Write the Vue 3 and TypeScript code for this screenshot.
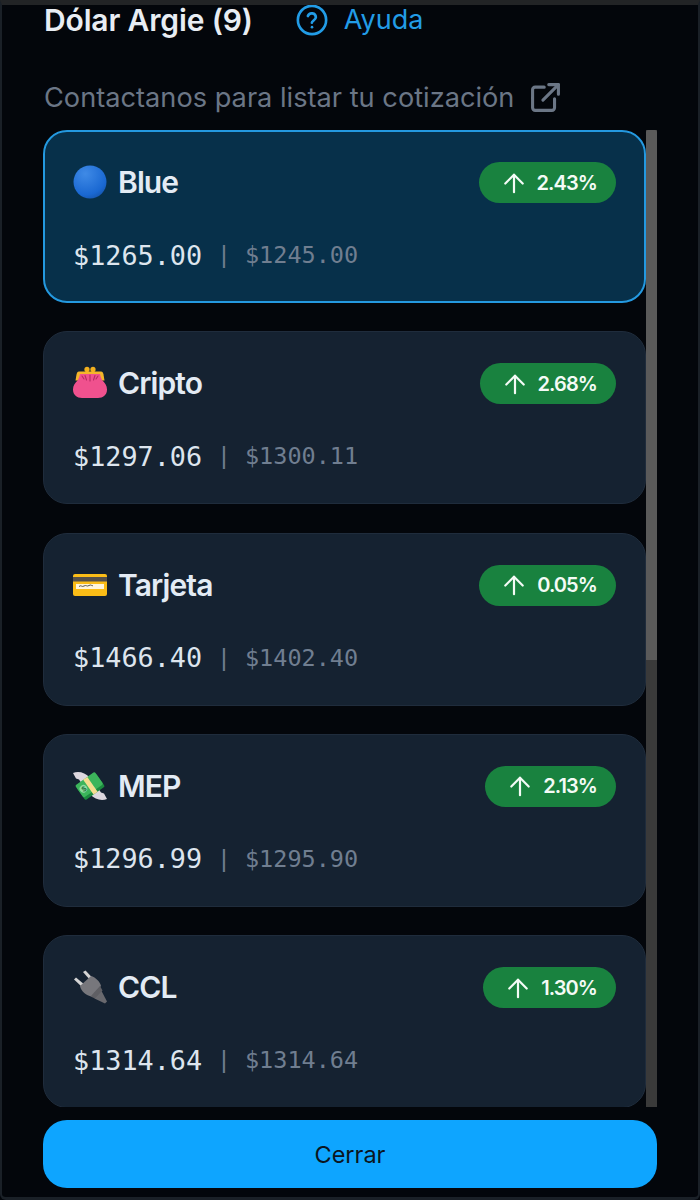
<script setup lang="ts">
interface Quote {
  name: string
  icon: string
  buy: string
  sell: string
  change: string
  active?: boolean
}

const quotes: Quote[] = [
  { name: 'Blue', icon: 'blue', buy: '$1265.00', sell: '$1245.00', change: '2.43%', active: true },
  { name: 'Cripto', icon: 'purse', buy: '$1297.06', sell: '$1300.11', change: '2.68%' },
  { name: 'Tarjeta', icon: 'card', buy: '$1466.40', sell: '$1402.40', change: '0.05%' },
  { name: 'MEP', icon: 'money', buy: '$1296.99', sell: '$1295.90', change: '2.13%' },
  { name: 'CCL', icon: 'plug', buy: '$1314.64', sell: '$1314.64', change: '1.30%' },
]

// la lista completa tiene 9 filas, la barra refleja eso
const totalQuotes = 9
const thumbHeight = `${(5 / totalQuotes) * 97.6}%`
</script>

<template>
  <div class="modal">
    <div class="head">
      <h2 class="title">Dólar Argie ({{ totalQuotes }})</h2>
      <a class="help">
        <svg class="help-icon" viewBox="0 0 24 24" fill="none" stroke="currentColor" stroke-width="2" stroke-linecap="round" stroke-linejoin="round">
          <circle cx="12" cy="12" r="10.6" />
          <path d="M8.9 9a3.1 3.1 0 0 1 6 1c0 2-3 2.6-3 4" />
          <path d="M12 17.4h.01" />
        </svg>
        Ayuda
      </a>
    </div>

    <a class="contact">
      Contactanos para listar tu cotización
      <svg class="contact-icon" viewBox="0 0 24 24" fill="none" stroke="currentColor" stroke-width="2.4" stroke-linecap="round" stroke-linejoin="round">
        <path d="M11 4H4a2 2 0 0 0-2 2v14a2 2 0 0 0 2 2h13a2 2 0 0 0 2-2v-7" />
        <path d="M10 14 22 2" />
        <path d="M14.5 2H22v7.5" />
      </svg>
    </a>

    <div class="list-wrap">
      <div class="list">
        <div v-for="q in quotes" :key="q.name" class="card" :class="{ active: q.active }">
          <div class="card-top">
            <div class="name">
              <svg class="emoji" viewBox="0 0 34 34">
                <template v-if="q.icon === 'blue'">
                  <defs>
                    <radialGradient id="ball" cx="0.36" cy="0.25" r="0.85">
                      <stop offset="0" stop-color="#3f8ae6" />
                      <stop offset="0.75" stop-color="#1a68d2" />
                      <stop offset="1" stop-color="#1553a8" />
                    </radialGradient>
                  </defs>
                  <circle cx="17" cy="17" r="16.5" fill="url(#ball)" />
                </template>
                <template v-else-if="q.icon === 'purse'">
                  <circle cx="14" cy="3.4" r="2.6" fill="#f2b01e" />
                  <circle cx="20" cy="3.4" r="2.6" fill="#f2b01e" />
                  <path d="M6 5.500h22c1.500 0 2 1 2.500 3l1 6H2.500l1-6c.5-2 1-3 2.500-3z" fill="#f4b52a" />
                  <path d="M7 8h20c.5 3 1.500 5 2.500 6.500 2.500 2.500 4.500 5 4.500 9 0 5.500-4 8.500-9 8.500H9c-5 0-9-3-9-8.500 0-4 2-6.500 4.500-9C5.500 13 6.500 11 7 8z" fill="#f0518e" />
                  <path d="M17 9v6M12 9.500l1.500 4.500M22 9.500 20.500 14M9 10l2 3M25 10l-2 3" stroke="#b52a62" stroke-width="1.100" stroke-linecap="round" />
                </template>
                <template v-else-if="q.icon === 'card'">
                  <rect x="0" y="6" width="34" height="22" rx="2" fill="#fbbd17" />
                  <rect x="0" y="9" width="34" height="4.500" fill="#55504a" />
                  <rect x="3" y="16" width="28" height="5" fill="#fff6dd" />
                  <path d="M6 18.500c2-2 3 1 5-.5s3 1 5-.5 3 1 4 0" stroke="#444" stroke-width=".9" fill="none" />
                </template>
                <template v-else-if="q.icon === 'money'">
                  <path d="M15 14 8 13.500 6 10.500 3 9.500 0 4C5 2 12 3 17 9z" fill="#dcd7de" />
                  <path d="M15 14 8 13.500 6 10.500 3 9.500 0 4C5 2 12 3 17 9z" fill="#dcd7de" transform="rotate(180 17 17)" />
                  <g transform="rotate(-35 17 17)">
                    <rect x="5" y="10" width="24" height="16" rx="1.500" fill="#1b8a3e" />
                    <rect x="5" y="8" width="24" height="15" rx="1.500" fill="#3cb55b" />
                    <rect x="15" y="8" width="5" height="18" fill="#f6dd8f" />
                    <circle cx="10" cy="15.500" r="3.800" fill="#8fdca2" />
                    <text x="10" y="18.500" font-size="7.500" text-anchor="middle" fill="#176d33" font-family="Liberation Sans, sans-serif" font-weight="700">$</text>
                  </g>
                </template>
                <template v-else>
                  <path d="m1 9.500 2-2 9 7.500-2.500 2.500z" fill="#d4d4d4" />
                  <path d="m10 2 2.500-1.500 7.500 8-2.500 2z" fill="#d4d4d4" />
                  <path d="M7 16 18 6c4 1 9 5.500 10 10L18.500 26.500c-5-1-10.500-5-11.500-10.500z" fill="#77777c" />
                  <path d="m17.500 26.500 9.500-10.500 2.500 4.500-7.500 8z" fill="#5f5f64" />
                  <path d="m21.500 28.500 7-7.500 5.500 10.500-2 2z" fill="#69696e" />
                </template>
              </svg>
              <span>{{ q.name }}</span>
            </div>
            <span class="badge">
              <svg class="arrow" viewBox="0 0 24 24" fill="none" stroke="currentColor" stroke-width="2.400" stroke-linecap="round" stroke-linejoin="round">
                <path d="M12 22V3" />
                <path d="M2.500 12.500 12 3l9.500 9.500" />
              </svg>
              {{ q.change }}
            </span>
          </div>
          <div class="prices">
            <span class="buy">{{ q.buy }}</span>
            <span class="sep">|</span>
            <span class="sell">{{ q.sell }}</span>
          </div>
        </div>
      </div>
      <div class="track">
        <div class="thumb" :style="{ height: thumbHeight }"></div>
      </div>
    </div>

    <button class="close">Cerrar</button>
  </div>
</template>

<style scoped>
.modal {
  box-sizing: border-box;
  height: 1200px;
  display: flex;
  flex-direction: column;
  padding: 0 41px 9px 41px;
  background: #03060b;
  border-left: 2px solid #1a2027;
  border-right: 2px solid #1a2027;
  border-bottom: 3px solid #1a2027;
  border-top: 5px solid #222426;
  border-radius: 0 0 6px 6px;
  font-family: Inter, "Noto Sans", sans-serif;
  overflow: hidden;
}

.head {
  display: flex;
  align-items: center;
  gap: 43px;
  height: 29px;
}

.title {
  margin: 0 0 0 1px;
  font-size: 30px;
  font-weight: 600;
  letter-spacing: -0.15px;
  color: #e8edf3;
  white-space: nowrap;
}

.help {
  display: flex;
  align-items: center;
  gap: 16px;
  font-size: 27px;
  color: #229ce6;
}

.help-icon {
  width: 32px;
  height: 32px;
}

.contact {
  display: flex;
  align-items: center;
  gap: 16px;
  margin-top: 43px;
  height: 40px;
  margin-left: 1px;
  font-size: 27.2px;
  color: #6b7686;
  white-space: nowrap;
}

.contact-icon {
  width: 31px;
  height: 31px;
}

.list-wrap {
  position: relative;
  flex: 1;
  min-height: 0;
  margin: 13px 0 13px 0;
}

.list {
  height: 100%;
  padding-right: 11px;
  display: flex;
  flex-direction: column;
  gap: 28.25px;
  overflow: hidden;
}

.track {
  position: absolute;
  top: 0;
  right: 0;
  bottom: 0;
  width: 11px;
  background: #3a3a3a;
}

.thumb {
  background: #5a5a5a;
  border-radius: 2px 2px 0 0;
}

.card {
  box-sizing: border-box;
  flex: none;
  height: 173px;
  padding: 31px 29px 0 29px;
  background: #152231;
  border: 1px solid #1f2c3c;
  border-radius: 24px;
}

.card.active {
  padding: 30px 28px 0 28px;
  background: #07304a;
  border: 2px solid #2499e0;
}

.card-top {
  display: flex;
  align-items: center;
  justify-content: space-between;
  height: 41px;
}

.name {
  display: flex;
  align-items: center;
  gap: 11px;
  margin-top: -1px;
  font-size: 30px;
  font-weight: 600;
  letter-spacing: -0.9px;
  color: #e3ebf4;
}

.emoji {
  width: 34px;
  height: 34px;
}

.badge {
  display: flex;
  align-items: center;
  gap: 12px;
  height: 41px;
  padding: 0 19px 0 24px;
  border-radius: 21px;
  background: #19823f;
  color: #f4fbf6;
  font-size: 20px;
  font-weight: 600;
  letter-spacing: -0.9px;
}

.arrow {
  width: 22px;
  height: 22px;
}

.prices {
  display: flex;
  align-items: center;
  height: 32px;
  margin-top: 36px;
  font-family: "DejaVu Sans Mono", "Liberation Mono", monospace;
}

.buy {
  font-size: 26.8px;
  color: #dde5ee;
}

.sep {
  margin: 0 14px 0 15px;
  font-size: 23px;
  color: #707e90;
}

.sell {
  font-size: 23.5px;
  color: #707e90;
}

.close {
  flex: none;
  height: 68px;
  border: 0;
  border-radius: 24px;
  background: #0ea5ff;
  color: #0b1520;
  font-family: Inter, "Noto Sans", sans-serif;
  font-size: 23.5px;
}
</style>

<style>
body {
  background: #03060b;
}
</style>
